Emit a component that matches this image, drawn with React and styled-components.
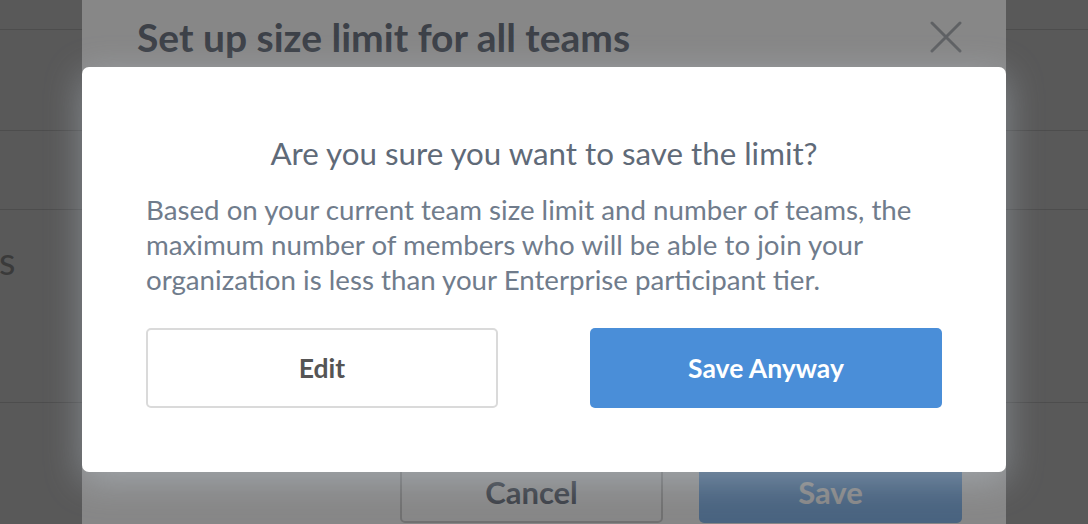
import styled, { createGlobalStyle } from 'styled-components';

const GlobalStyle = createGlobalStyle`
    html, body {
        margin: 0;
        padding: 0;
        height: 100%;
        overflow: hidden;
    }

    body {
        font-family: Lato, "Noto Sans", "Liberation Sans", sans-serif;
        background: #ffffff;
    }

    #root {
        height: 100%;
    }
`;

// page rows that sit behind both dialogs
const pageRows = [
    { height: 30, label: '' },
    { height: 101, label: '' },
    { height: 79, label: '' },
    { height: 193, label: 'Teams' },
];

export default function App() {
    return (
        <>
            <GlobalStyle />
            <Page>
                <PageList>
                    {pageRows.map((row, i) => (
                        <PageRow key={i} $height={row.height}>
                            {row.label && <PageLabel>{row.label}</PageLabel>}
                        </PageRow>
                    ))}
                </PageList>

                <Overlay $dim={0.34}>
                    <BackModal>
                        <BackHeader>
                            <BackTitle>Set up size limit for all teams</BackTitle>
                            <CloseButton aria-label="close">
                                <svg width="32" height="32" viewBox="0 0 32 32">
                                    <path d="M2 2 L30 30 M30 2 L2 30" stroke="currentColor" strokeWidth="3" strokeLinecap="round" />
                                </svg>
                            </CloseButton>
                        </BackHeader>
                        <BackBody />
                        <BackFooter>
                            <CancelButton>Cancel</CancelButton>
                            <SaveButton>Save</SaveButton>
                        </BackFooter>
                    </BackModal>
                </Overlay>

                <Overlay $dim={0.47}>
                    <ConfirmDialog>
                        <ConfirmTitle>Are you sure you want to save the limit?</ConfirmTitle>
                        <ConfirmText>
                            Based on your current team size limit and number of teams, the
                            maximum number of members who will be able to join your
                            organization is less than your Enterprise participant tier.
                        </ConfirmText>
                        <ConfirmActions>
                            <EditButton>Edit</EditButton>
                            <PrimaryButton>Save Anyway</PrimaryButton>
                        </ConfirmActions>
                    </ConfirmDialog>
                </Overlay>
            </Page>
        </>
    );
}

const Page = styled.div`
    position: relative;
    height: 100%;
    overflow: hidden;
    background: #ffffff;
`;

const PageList = styled.div`
    display: flex;
    flex-direction: column;
`;

const PageRow = styled.div`
    height: ${props => props.$height}px;
    border-bottom: 1px solid #dcdcdc;
    display: flex;
    align-items: flex-start;
    box-sizing: border-box;
`;

const PageLabel = styled.span`
    margin: 24px 0 0 -89px;
    font-size: 38px;
    line-height: 52px;
    color: #a8a8a8;
`;

const Overlay = styled.div`
    position: absolute;
    inset: 0;
    background: rgba(0, 0, 0, ${props => props.$dim});
    display: flex;
    flex-direction: column;
    align-items: center;
`;

const BackModal = styled.div`
    width: 924px;
    background: #ffffff;
    border-radius: 6px;
    margin-top: -6px;
    display: flex;
    flex-direction: column;
`;

const BackHeader = styled.div`
    display: flex;
    align-items: center;
    justify-content: space-between;
    padding: 17px 44px 0 55px;
`;

const BackTitle = styled.h2`
    margin: 0;
    font-size: 39px;
    line-height: 52px;
    font-weight: 700;
    color: #737b88;
`;

const CloseButton = styled.button`
    border: none;
    background: none;
    padding: 0;
    display: flex;
    color: #b4b8be;
    cursor: pointer;
`;

const BackBody = styled.div`
    height: 398px;
`;

const BackFooter = styled.div`
    display: flex;
    justify-content: flex-end;
    gap: 36px;
    padding: 0 44px 20px;
`;

const FooterButton = styled.button`
    width: 263px;
    height: 62px;
    border-radius: 5px;
    font-family: inherit;
    font-size: 31px;
    font-weight: 700;
    cursor: pointer;
`;

const CancelButton = styled(FooterButton)`
    background: #ffffff;
    border: 2px solid #d4d4d4;
    color: #737b88;
`;

const SaveButton = styled(FooterButton)`
    background: #8cbef1;
    border: none;
    color: #ffffff;
`;

const ConfirmDialog = styled.div`
    margin-top: 67px;
    width: 924px;
    box-sizing: border-box;
    padding: 64px;
    background: #ffffff;
    border-radius: 7px;
    box-shadow: 0 8px 36px rgba(200, 212, 226, 0.4);
    display: flex;
    flex-direction: column;
    align-items: stretch;
`;

const ConfirmTitle = styled.h3`
    margin: 0;
    text-align: center;
    font-size: 31.3px;
    line-height: 44px;
    font-weight: 400;
    color: #5f6a78;
`;

const ConfirmText = styled.p`
    margin: 17px 0 31px;
    font-size: 27.7px;
    line-height: 35px;
    color: #707c8c;
`;

const ConfirmActions = styled.div`
    display: flex;
    justify-content: space-between;
`;

const ActionButton = styled.button`
    width: 352px;
    height: 80px;
    border-radius: 5px;
    font-family: inherit;
    font-size: 26.5px;
    font-weight: 700;
    cursor: pointer;
`;

const EditButton = styled(ActionButton)`
    background: #ffffff;
    border: 2px solid #dadada;
    color: #555555;
`;

const PrimaryButton = styled(ActionButton)`
    background: #4a8ed8;
    border: none;
    color: #ffffff;
`;
